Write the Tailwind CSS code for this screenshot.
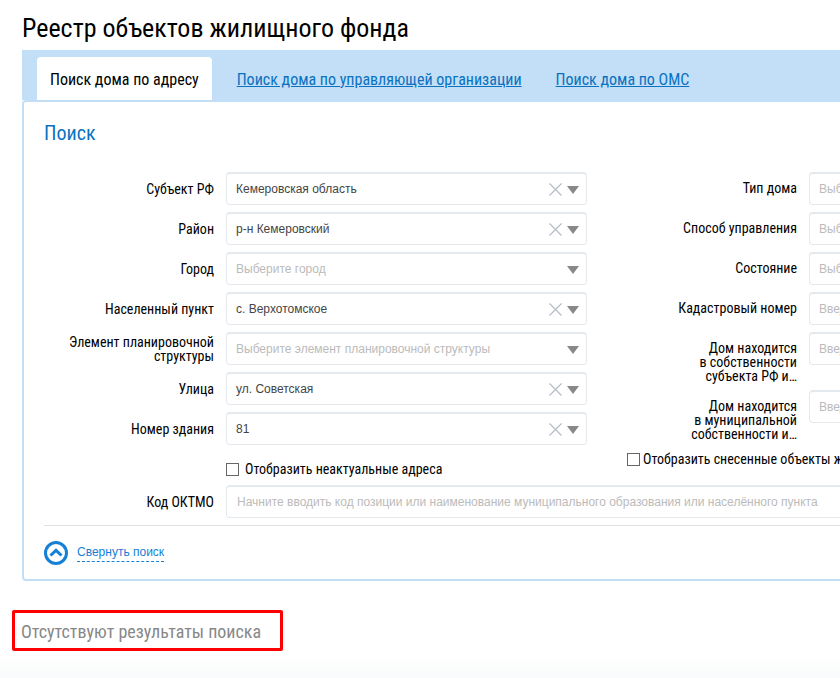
<!DOCTYPE html>
<html lang="ru">
<head>
  <meta charset="UTF-8">
  <title>Реестр объектов жилищного фонда</title>
  <meta name="viewport" content="width=device-width, initial-scale=1.0">
  <script src="https://cdn.jsdelivr.net/npm/@tailwindcss/browser@4"></script>
</head>
<body class="bg-white text-black overflow-x-hidden font-['Roboto_Condensed','Roboto',sans-serif]">

  <div class="min-w-[1214px] px-[22px] pt-3">
    <h1 class="text-[26px] leading-8 mb-1.5">Реестр объектов жилищного фонда</h1>

    <!-- Tabs -->
    <nav class="flex bg-[#c2dff7] h-[50px] pt-[7px] pl-[15px] text-base">
      <a href="#address" class="bg-white rounded-t px-[13px] leading-[45px]">Поиск дома по адресу</a>
      <a href="#company" class="text-[#0a72c0] underline px-[17px] ml-2 leading-[45px]">Поиск дома по управляющей организации</a>
      <a href="#oms" class="text-[#0a72c0] underline px-[17px] leading-[45px]">Поиск дома по ОМС</a>
    </nav>

    <main class="border-2 border-[#c2dff7] rounded-sm px-5 pt-[17px] pb-3.5">
      <h2 class="text-xl leading-7 text-[#0a72c0] mb-[25px]">Поиск</h2>

      <form class="text-sm leading-3.5">
        <div class="grid grid-cols-2 gap-x-10">
          <div id="left" class="flex flex-col gap-[7px]">
          </div>
          <div id="right" class="flex flex-col gap-[7px]">
          </div>
        </div>

        <div class="flex items-center gap-3 mt-[7px]">
          <label for="oktmo" class="w-[170px] shrink-0 text-right">Код ОКТМО</label>
          <input id="oktmo" type="text" placeholder="Начните вводить код позиции или наименование муниципального образования или населённого пункта" class="grow h-[33px] border border-[#e4e9ee] border-t-2 rounded px-2.5 font-['Liberation_Sans',sans-serif] text-xs text-[#444] placeholder-[#bbb]">
        </div>
      </form>

      <div class="border-t border-[#dfe1e3] mt-[7px] pt-[15px]">
        <button type="button" class="flex items-center gap-[9px] font-['Liberation_Sans',sans-serif] text-xs text-[#1580d8]">
          <svg class="size-6" viewBox="0 0 24 24" fill="none" stroke="#1580d8" stroke-width="3">
            <circle cx="12" cy="12" r="10.5"/>
            <path d="M6.5 14.5 12 9.3 17.5 14.5"/>
          </svg>
          <span class="border-b border-dashed border-[#1580d8] leading-[17px]">Свернуть поиск</span>
        </button>
      </div>
    </main>
  </div>

  <div class="w-fit ml-3 mt-[29px] border-[3px] border-[#fe0000] rounded-xs pl-1.5 pr-[19px] pt-0.5">
    <p class="text-lg leading-[33px] text-[#888]">Отсутствуют результаты поиска</p>
  </div>
  <div class="h-[27px] bg-linear-to-b from-white to-[#fafbfc]"></div>

  <script>
    const boxClass = "w-full h-[33px] border border-[#e4e9ee] border-t-2 rounded px-[9px] bg-white appearance-none font-['Liberation_Sans',sans-serif] text-xs";

    const leftFields = [
      { label: 'Субъект РФ', value: 'Кемеровская область' },
      { label: 'Район', value: 'р-н Кемеровский' },
      { label: 'Город', hint: 'Выберите город' },
      { label: 'Населенный пункт', value: 'с. Верхотомское' },
      { label: 'Элемент планировочной структуры', hint: 'Выберите элемент планировочной структуры' },
      { label: 'Улица', value: 'ул. Советская' },
      { label: 'Номер здания', value: '81' },
    ];
    const rightFields = [
      { label: 'Тип дома', hint: 'Выберите тип дома' },
      { label: 'Способ управления', hint: 'Выберите способ управления' },
      { label: 'Состояние', hint: 'Выберите состояние' },
      { label: 'Кадастровый номер', hint: 'Введите кадастровый номер', input: true },
      { label: 'Дом находится<br>в собственности<br>субъекта РФ и…', hint: 'Введите значение', input: true },
      { label: 'Дом находится<br>в муниципальной<br>собственности и…', hint: 'Введите значение', input: true },
    ];

    function control(f, id) {
      if (f.input) {
        return `<input id="${id}" type="text" placeholder="${f.hint}" class="${boxClass} placeholder-[#bbb]">`;
      }
      const clear = f.value ? `
        <button type="button" aria-label="Очистить" class="absolute right-[25px] top-[11px]">
          <svg class="w-[13px] h-[13px]" viewBox="0 0 13 13" stroke="#b4bcc6" stroke-width="1.2"><path d="M.5.5l12 12M12.5.5l-12 12"/></svg>
        </button>` : '';
      return `
        <select id="${id}" class="${boxClass} ${f.value ? 'text-[#444]' : 'text-[#bbb]'}"><option>${f.value || f.hint}</option></select>${clear}
        <svg class="absolute right-2 top-3.5 w-3 h-2 pointer-events-none" viewBox="0 0 12 8" fill="#888"><path d="M0 0h12L6 8z"/></svg>`;
    }

    function rows(fields, prefix, align) {
      return fields.map((f, i) => `
        <div class="flex ${align} gap-3">
          <label for="${prefix}${i}" class="w-[170px] shrink-0 text-right">${f.label}</label>
          <div class="relative grow">${control(f, prefix + i)}</div>
        </div>`).join('');
    }

    function checkbox(id, text, rowClass) {
      return `
        <div class="flex items-center ${rowClass}">
          <input id="${id}" type="checkbox" class="appearance-none size-[13px] shrink-0 border border-[#666] bg-white">
          <label for="${id}" class="whitespace-nowrap">${text}</label>
        </div>`;
    }

    document.getElementById('left').innerHTML = rows(leftFields, 'l', 'items-center')
      + checkbox('old', 'Отобразить неактуальные адреса', 'h-[26px] pt-2 gap-1.5 ml-[182px]');
    document.getElementById('right').innerHTML = rows(rightFields, 'r', 'items-start [&>label]:pt-[9px]')
      + checkbox('demolished', 'Отобразить снесенные объекты жилищного фонда', 'h-[22px] gap-[3px]');
  </script>

</body>
</html>
